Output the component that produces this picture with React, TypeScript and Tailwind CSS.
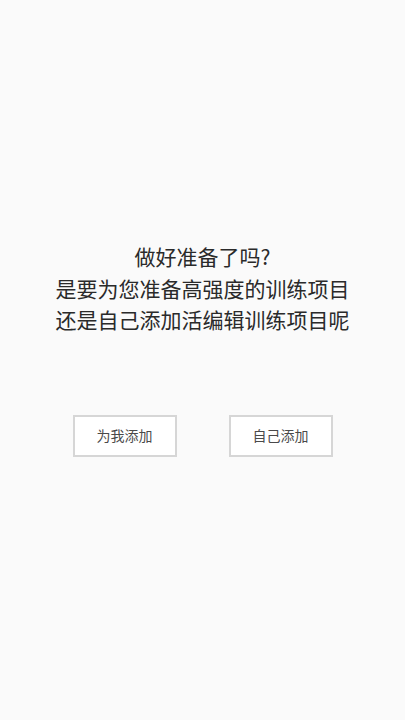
import React from 'react'

const font = { fontFamily: '"Noto Sans CJK SC", "Noto Sans", sans-serif' }

export default function App() {
  return (
    <div className="min-h-[720px] w-full bg-[#fafafa] flex flex-col items-center pt-[241px]" style={font}>
      <div className="text-center text-[21px] leading-[31.5px] text-[#2a2a2a]">
        <p>做好准备了吗?</p>
        <p>是要为您准备高强度的训练项目</p>
        <p>还是自己添加活编辑训练项目呢</p>
      </div>

      <div className="mt-[79px] flex gap-[52px]">
        <button className="w-[104px] h-[42px] border-2 border-[#d6d6d6] bg-white text-[14px] text-[#4a4a4a]">
          为我添加
        </button>
        <button className="w-[104px] h-[42px] border-2 border-[#d6d6d6] bg-white text-[14px] text-[#4a4a4a]">
          自己添加
        </button>
      </div>
    </div>
  )
}
